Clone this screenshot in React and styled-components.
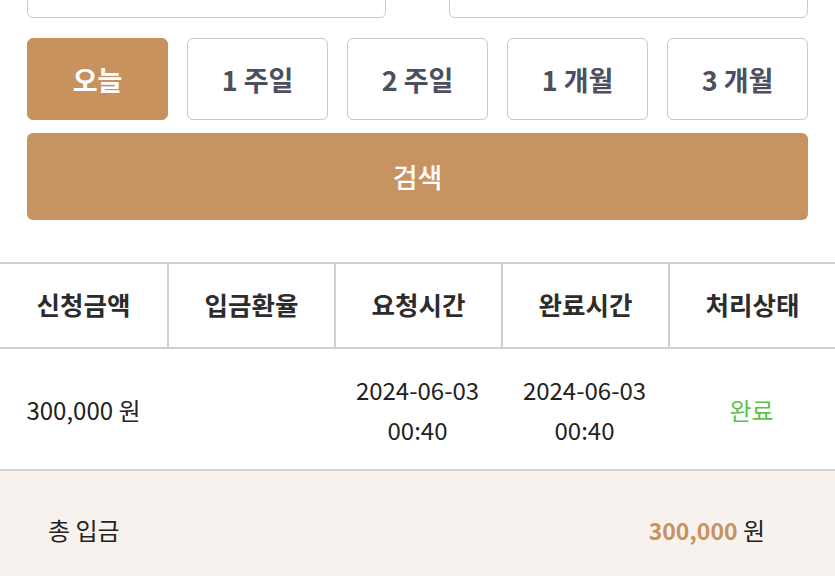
import React, { useState } from "react";
import styled, { createGlobalStyle } from "styled-components";

const GlobalStyle = createGlobalStyle`
  html, body {
    margin: 0;
    padding: 0;
    background: #ffffff;
    font-family: "Noto Sans CJK KR", "Noto Sans", sans-serif;
    overflow: hidden;
  }
  * { box-sizing: border-box; }
`;

const periods = ["오늘", "1 주일", "2 주일", "1 개월", "3 개월"];

const rows = [
  {
    amount: "300,000 원",
    rate: "",
    requested: ["2024-06-03", "00:40"],
    completed: ["2024-06-03", "00:40"],
    status: "완료",
  },
];

function App() {
  const [period, setPeriod] = useState(0);

  return (
    <Page>
      <GlobalStyle />
      <Form>
        <DateRow>
          <DateInput />
          <DateInput />
        </DateRow>
        <PeriodRow>
          {periods.map((p, i) => (
            <PeriodButton key={p} $active={period === i} onClick={() => setPeriod(i)}>
              {p}
            </PeriodButton>
          ))}
        </PeriodRow>
        <SearchButton>검색</SearchButton>
      </Form>

      <Table>
        <HeadRow>
          <HeadCell>신청금액</HeadCell>
          <HeadCell>입금환율</HeadCell>
          <HeadCell>요청시간</HeadCell>
          <HeadCell>완료시간</HeadCell>
          <HeadCell>처리상태</HeadCell>
        </HeadRow>
        {rows.map((r, i) => (
          <BodyRow key={i}>
            <Cell>{r.amount}</Cell>
            <Cell>{r.rate}</Cell>
            <Cell>
              {r.requested[0]}
              <br />
              {r.requested[1]}
            </Cell>
            <Cell>
              {r.completed[0]}
              <br />
              {r.completed[1]}
            </Cell>
            <Cell $status>{r.status}</Cell>
          </BodyRow>
        ))}
      </Table>

      <Total>
        <TotalLabel>총 입금</TotalLabel>
        <TotalValue>
          <Amount>300,000</Amount> 원
        </TotalValue>
      </Total>
    </Page>
  );
}

const Page = styled.div`
  width: 835px;
  height: 576px;
  overflow: hidden;
`;

const Form = styled.div`
  display: flex;
  flex-direction: column;
  padding: 0 27px;
  margin-top: -32px;
`;

const DateRow = styled.div`
  display: flex;
  justify-content: space-between;
`;

const DateInput = styled.div`
  width: 359px;
  height: 50px;
  border: 1px solid #cacaca;
  border-radius: 6px;
  background: #fff;
`;

const PeriodRow = styled.div`
  display: grid;
  grid-template-columns: repeat(5, 1fr);
  gap: 19px;
  margin-top: 20px;
`;

const PeriodButton = styled.button`
  height: 82px;
  border-radius: 6px;
  border: 1px solid ${(p) => (p.$active ? "#c8925f" : "#c9c9c9")};
  background: ${(p) => (p.$active ? "#c8925f" : "#ffffff")};
  color: ${(p) => (p.$active ? "#ffffff" : "#4b505c")};
  font-family: inherit;
  font-size: 27px;
  font-weight: 700;
  cursor: pointer;
  padding: 0;
`;

const SearchButton = styled.button`
  margin-top: 13px;
  height: 87px;
  border: none;
  border-radius: 6px;
  background: #c79361;
  color: #ffffff;
  font-family: inherit;
  font-size: 27px;
  font-weight: 500;
  cursor: pointer;
`;

const Table = styled.div`
  margin-top: 42px;
  border-top: 2px solid #d0d0d0;
`;

const HeadRow = styled.div`
  display: grid;
  grid-template-columns: repeat(5, 1fr);
  height: 85px;
  border-bottom: 2px solid #d0d0d0;
`;

const HeadCell = styled.div`
  display: flex;
  align-items: center;
  justify-content: center;
  font-size: 25.5px;
  font-weight: 700;
  color: #2c2c2c;
  padding-bottom: 4px;
  & + & {
    border-left: 2px solid #d0d0d0;
  }
`;

const BodyRow = styled.div`
  display: grid;
  grid-template-columns: repeat(5, 1fr);
  height: 122px;
  border-bottom: 2px solid #d6cfcc;
`;

const Cell = styled.div`
  display: flex;
  align-items: center;
  justify-content: center;
  text-align: center;
  font-size: 24px;
  line-height: 40px;
  color: ${(p) => (p.$status ? "#5cc24a" : "#222222")};
  padding-top: 2px;
`;

const Total = styled.div`
  background: #f8f2ee;
  height: 120px;
  display: flex;
  align-items: center;
  justify-content: space-between;
  padding: 0 70px 4px 48px;
`;

const TotalLabel = styled.div`
  font-size: 24px;
  color: #222222;
`;

const TotalValue = styled.div`
  font-size: 24px;
  color: #222222;
`;

const Amount = styled.span`
  color: #c8925f;
  font-weight: 700;
  font-size: 23px;
`;

export default App;
